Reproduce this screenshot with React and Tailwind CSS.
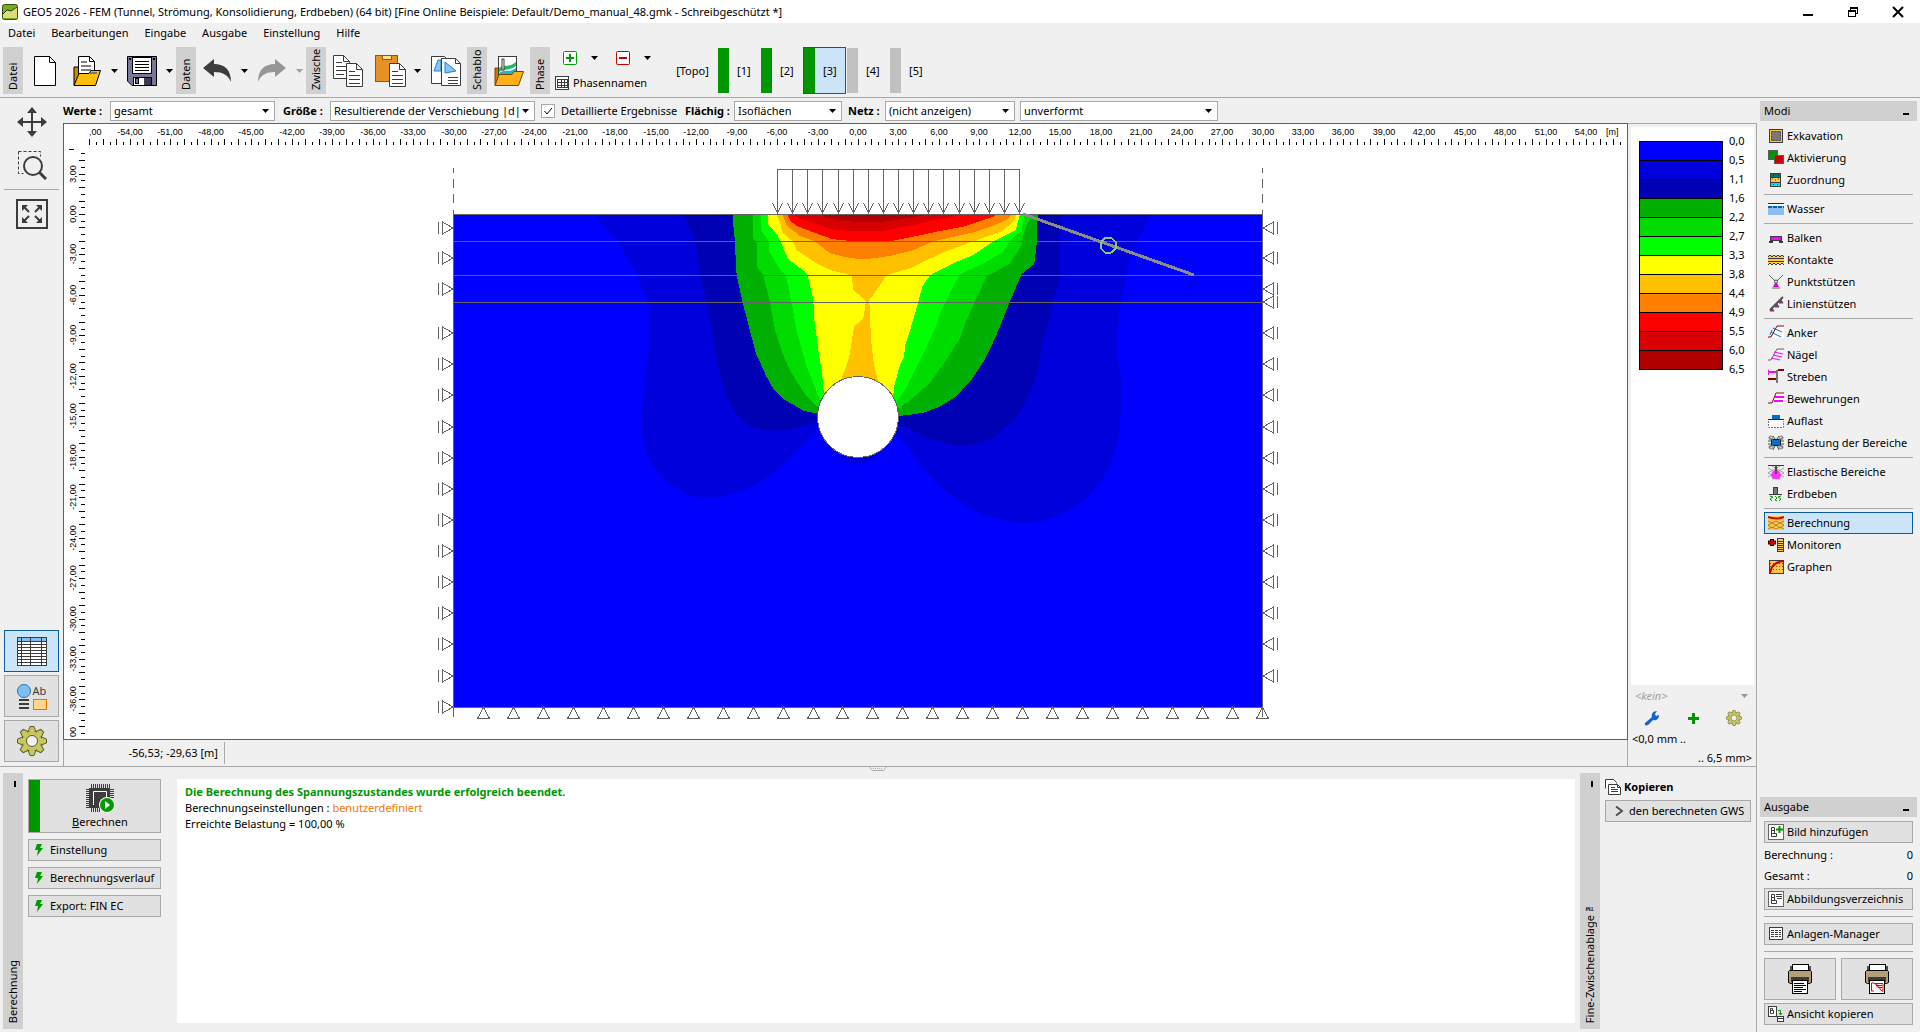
import { useState } from "react";

const menuItems = ["Datei", "Bearbeitungen", "Eingabe", "Ausgabe", "Einstellung", "Hilfe"];

const phases = [
  { id: 1, done: true },
  { id: 2, done: true },
  { id: 3, done: true },
  { id: 4, done: false },
  { id: 5, done: false },
];

const legendColors = [
  "#0000ff", "#0000dc", "#0000b4", "#00b000", "#00dc00", "#00ff00",
  "#ffff00", "#ffc000", "#ff8000", "#ff0000", "#d80000", "#b00000",
];
const legendLabels = ["0,0", "0,5", "1,1", "1,6", "2,2", "2,7", "3,3", "3,8", "4,4", "4,9", "5,5", "6,0", "6,5"];

const modeGroups = [
  ["Exkavation", "Aktivierung", "Zuordnung"],
  ["Wasser"],
  ["Balken", "Kontakte", "Punktstützen", "Linienstützen"],
  ["Anker", "Nägel", "Streben", "Bewehrungen", "Auflast", "Belastung der Bereiche"],
  ["Elastische Bereiche", "Erdbeben"],
  ["Berechnung", "Monitoren", "Graphen"],
];

/* ---------- Icons ---------- */

const ModeIcon = ({ name }) => {
  const shapes = {
    "Exkavation": (
      <>
        <rect x="1.5" y="1.5" width="13" height="13" fill="#ffc84a" stroke="#3c3c3c" />
        <rect x="3.5" y="3.5" width="9" height="9" fill="#787878" stroke="#3c3c3c" strokeDasharray="2 1" />
      </>
    ),
    "Aktivierung": (
      <>
        <rect x="0.5" y="0.5" width="9" height="9" fill="#009600" stroke="#5a5a5a" />
        <rect x="6.5" y="5.5" width="9" height="8" fill="#c80000" stroke="#5a5a5a" />
      </>
    ),
    "Zuordnung": (
      <>
        <rect x="2.5" y="1.5" width="10" height="4" fill="#00786e" stroke="#3c3c3c" />
        <rect x="2.5" y="5.5" width="10" height="5" fill="#ffc84a" stroke="#3c3c3c" />
        <rect x="2.5" y="10.5" width="10" height="4" fill="#00e6f0" stroke="#3c3c3c" />
        <path d="M5 4l2-2M9 4l2-2M4 7h1M7 8h1M10 7h1M5 12l1 1M9 12l1 1" stroke="#3c3c3c" />
      </>
    ),
    "Wasser": (
      <>
        <rect y="2" width="16" height="1" fill="#8c0000" />
        <rect y="3" width="16" height="2" fill="#fff" />
        <rect y="5" width="16" height="9" fill="#8cbef0" />
        <path d="M0 6h16" stroke="#0064b4" strokeWidth="2" strokeDasharray="4 1" />
      </>
    ),
    "Balken": (
      <>
        <rect x="2.5" y="6.5" width="11" height="4" fill="#ff00ff" stroke="#3c3c3c" />
        <path d="M1 12h4M11 12h4" stroke="#3c3c3c" strokeWidth="2" />
      </>
    ),
    "Kontakte": (
      <>
        <rect y="3" width="16" height="9" fill="#ffc84a" />
        <path d="M0 5l2-2 2 2 2-2 2 2 2-2 2 2 2-2 2 2M0 13l2-2 2 2 2-2 2 2 2-2 2 2 2-2 2 2M0 6.500h16M0 9.500h16" stroke="#3c3c3c" fill="none" />
      </>
    ),
    "Punktstützen": (
      <>
        <path d="M1 1l7 7 7-7M8 8l-2 4M8 8l2 4M4 14h8" stroke="#646464" fill="none" />
        <path d="M8 9l3 4H5z" fill="#d200d2" />
        <circle cx="8" cy="7.500" r="1.500" fill="#fff" stroke="#3c3c3c" />
      </>
    ),
    "Linienstützen": (
      <>
        <path d="M2 14L15 1" stroke="#505050" strokeWidth="2" />
        <path d="M13 4l2 3h-4zM9 8l2 3H7zM4 12l2 3H2z" fill="#d200d2" stroke="#505050" />
      </>
    ),
    "Anker": (
      <>
        <path d="M9 1h7v12H3z" fill="#fff" />
        <path d="M0 12h3l6-11h7" stroke="#8c0000" fill="none" />
        <path d="M5 3l9 4M3 7l10 5M4 5l-2 5" stroke="#0a6ec8" fill="none" />
      </>
    ),
    "Nägel": (
      <>
        <path d="M0 13h3L9 2h7" stroke="#646464" fill="none" />
        <path d="M6 5l9 2M5 8l9 2M3 11l9 2" stroke="#ff00ff" />
      </>
    ),
    "Streben": (
      <>
        <path d="M0 3h8" stroke="#ff00ff" strokeWidth="2" />
        <path d="M0.500 1v5" stroke="#ff00ff" />
        <path d="M10 1h6M0 10h8" stroke="#8c0000" strokeWidth="2" />
        <path d="M9 1v13" stroke="#787878" strokeWidth="2" />
      </>
    ),
    "Bewehrungen": (
      <>
        <path d="M8 1h8v12H3z" fill="#fff" />
        <path d="M0 12h4L8 2h8" stroke="#8c0000" fill="none" />
        <path d="M7 6h9M6 10h9" stroke="#ff00ff" strokeWidth="2" />
      </>
    ),
    "Auflast": (
      <>
        <rect x="4" y="2" width="8" height="4" fill="#0a6ec8" />
        <rect y="7" width="16" height="8" fill="#fff" />
        <path d="M0 6.500h16" stroke="#8c0000" />
        <path d="M0.500 8v6.500h15V8" stroke="#787878" fill="none" strokeDasharray="2 1" />
      </>
    ),
    "Belastung der Bereiche": (
      <>
        <path d="M1 2l4 3M5 1l2 3M11 1L9 4M15 2l-4 3M1 13l4-3M5 15l2-4M11 15l-2-4M15 13l-4-3M0 6h4M12 6h4M0 9h4M12 9h4" stroke="#505050" />
        <rect x="3.500" y="4.500" width="9" height="6" fill="#0a6ec8" stroke="#1e1e1e" />
        <circle cx="3" cy="3" r="2" fill="none" stroke="#787878" />
        <circle cx="13" cy="3" r="2" fill="none" stroke="#787878" />
        <circle cx="3" cy="12" r="2" fill="none" stroke="#787878" />
        <circle cx="13" cy="12" r="2" fill="none" stroke="#787878" />
      </>
    ),
    "Elastische Bereiche": (
      <>
        <path d="M0 4l16 9M0 9l12 6M4 2l12 7M16 4L0 13M12 2L0 9M16 9L4 15" stroke="#a0a0a0" />
        <path d="M0 1.500h16" stroke="#3c3c3c" />
        <path d="M8 5l4 3 1 4-2 3H5l-2-3 1-4z" fill="#ff32ff" />
        <path d="M8 2v8" stroke="#505050" strokeWidth="2" />
      </>
    ),
    "Erdbeben": (
      <>
        <rect x="5.500" y="1.500" width="4" height="7" fill="#787878" stroke="#3c3c3c" />
        <path d="M1 8.500h13" stroke="#3c3c3c" />
        <path d="M2 10l3 1-3 2 2 2M7 10l2 2-2 2 2 1M13 10l-3 1 3 2-2 2" stroke="#00a000" fill="none" />
      </>
    ),
    "Berechnung": (
      <>
        <rect y="1" width="16" height="14" fill="#ffc84a" />
        <path d="M0 6l4 2 4-2 4 2 4-2M0 10l4-2 4 2 4-2 4 2M0 10l4 3 4-3 4 3 4-3M0 14l4-2 4 2 4-2 4 2" stroke="#b48228" fill="none" />
        <path d="M0 2c4 2 12 2 16 0" stroke="#c80000" strokeWidth="2" fill="none" />
      </>
    ),
    "Monitoren": (
      <>
        <path d="M4 2v7M0 5.500h8" stroke="#3c0000" strokeWidth="4" />
        <path d="M4 3v5M1 5.500h6" stroke="#dc0000" strokeWidth="2" />
        <rect x="9.500" y="1.500" width="6" height="13" fill="#ffc84a" stroke="#3c3c3c" />
        <path d="M10 4.500h5M10 6.500h5M10 8.500h5M10 10.500h5M10 12.500h5" stroke="#3c3c3c" />
      </>
    ),
    "Graphen": (
      <>
        <rect x="1.500" y="1.500" width="14" height="13" fill="#ffc84a" stroke="#3c3c3c" />
        <path d="M2 4.500h13M2 7.500h13M2 10.500h13" stroke="#78500a" strokeDasharray="1 2" />
        <path d="M2 14C3 8 7 3 15 2" stroke="#c80000" strokeWidth="2" fill="none" />
      </>
    ),
  };
  return (
    <svg width="16" height="16" viewBox="0 0 16 16" className="shrink-0">
      {shapes[name]}
    </svg>
  );
};

const Caret = ({ className = "text-black" }) => (
  <svg width="7" height="4" viewBox="0 0 7 4" className={className}>
    <path d="M0 0h7L3.500 4z" fill="currentColor" />
  </svg>
);

const IconNew = () => (
  <svg width="22" height="30" viewBox="0 0 22 30">
    <path d="M0.500 0.500h15l6 6v23h-21z" fill="#fff" stroke="#000" />
    <path d="M15.500 0.500v6h6" fill="none" stroke="#000" />
  </svg>
);

const IconOpen = () => (
  <svg width="28" height="30" viewBox="0 0 28 30">
    <path d="M1 29V11h4l2 2h14" fill="#c88c00" stroke="#000" />
    <path d="M5.500 19V0.500h11l5 5V19" fill="#fff" stroke="#000" />
    <path d="M16.500 0.500v5h5M8 6h6M8 10h10M8 14h10" fill="none" stroke="#000" />
    <path d="M1 29.500l5-12h10l2-3h9.500l-5 15z" fill="#ffbe0a" stroke="#000" />
    <path d="M17 17h7" stroke="#787878" strokeWidth="2" />
  </svg>
);

const IconSave = () => (
  <svg width="30" height="30" viewBox="0 0 30 30">
    <path d="M0.500 0.500h29v29H5l-4.500-4.500z" fill="#78789b" stroke="#000" />
    <rect x="5.500" y="1.500" width="19" height="16" fill="#fff" stroke="#000" />
    <path d="M8 5.500h14M8 8.500h14M8 11.500h14M8 14.500h14" stroke="#000" />
    <rect x="6.500" y="21.500" width="18" height="8" fill="#fff" stroke="#000" />
    <rect x="17" y="22" width="7" height="7" fill="#3c3c50" />
    <rect x="8.500" y="22.500" width="3" height="5" fill="#78789b" stroke="#000" />
    <path d="M2 2h2v2H2zM26 2h2v2h-2z" fill="#000" />
  </svg>
);

const IconUndo = ({ className }) => (
  <svg width="28" height="24" viewBox="0 0 28 24" className={className}>
    <path d="M0 9L11 0v5c11 0 17 6 17 18-3-7-8-10-17-10v5z" fill="currentColor" />
  </svg>
);

const IconCopy = () => (
  <svg width="30" height="32" viewBox="0 0 30 32">
    <path d="M0.500 0.500h10l6 6v17h-16z" fill="#fff" stroke="#3c3c3c" />
    <path d="M10.500 0.500v6h6M3 7.500h6M3 11.500h11M3 15.500h11M3 19.500h8" fill="none" stroke="#3c3c3c" />
    <path d="M13.500 8.500h10l6 6v17h-16z" fill="#fff" stroke="#3c3c3c" />
    <path d="M23.500 8.500v6h6M16 16.500h6M16 20.500h11M16 24.500h11M16 28.500h11" fill="none" stroke="#3c3c3c" />
  </svg>
);

const IconPaste = () => (
  <svg width="31" height="32" viewBox="0 0 31 32">
    <rect x="0.500" y="0.500" width="22" height="26" fill="#e69122" stroke="#8c5a14" />
    <rect x="7.500" y="0.500" width="9" height="4" fill="#ffe08c" stroke="#8c5a14" />
    <path d="M14.500 8.500h10l6 6v17h-16z" fill="#fff" stroke="#3c3c3c" />
    <path d="M24.500 8.500v6h6M17 16.500h6M17 20.500h11M17 24.500h11M17 28.500h11" fill="none" stroke="#3c3c3c" />
  </svg>
);

const IconPictures = () => (
  <svg width="30" height="30" viewBox="0 0 30 30">
    <path d="M0.500 0.500h13l4 4v23h-17z" fill="#fff" stroke="#3c3c3c" />
    <path d="M3 15l4-11h3v11z" fill="#8cc3f0" stroke="#1e82d2" />
    <path d="M10.500 2.500h14l5 5v22h-19z" fill="#fff" stroke="#3c3c3c" />
    <path d="M24.500 2.500v5h5" fill="none" stroke="#3c3c3c" />
    <path d="M14 17V6l11 9z" fill="#8cc3f0" stroke="#1e82d2" />
    <path d="M17 21.500h10M17 24.500h10M17 27.500h10" stroke="#3c3c3c" />
  </svg>
);

const IconTemplate = () => (
  <svg width="30" height="30" viewBox="0 0 30 30">
    <path d="M1 29V12h4v17" fill="#c87800" stroke="#784600" />
    <rect x="4.500" y="0.500" width="18" height="22" fill="#fff" stroke="#3c3c3c" />
    <path d="M5 12c5-4 10 0 17-6v4c-6 5-12 2-17 6z" fill="#28b464" />
    <path d="M5 17c6-4 10 0 17-5v4c-6 5-12 1-17 5z" fill="#28b4c8" />
    <path d="M12 20l10-4v5H12z" fill="#e6501e" />
    <rect x="8" y="3" width="2" height="11" fill="#fff" stroke="#3c3c3c" />
    <path d="M1 29.500l4-11h13l2-3h9.500l-5 14z" fill="#ffaf19" stroke="#784600" />
  </svg>
);

const IconGear = ({ size }) => (
  <svg width={size} height={size} viewBox="-15 -15 30 30">
    <g fill="#c8c85a" stroke="#5a5a3c">
      {[0, 45, 90, 135, 180, 225, 270, 315].map((angle) => (
        <path key={angle} d="M-4 -9l2-5.500h4l2 5.500" transform={`rotate(${angle})`} />
      ))}
      <circle r="10" />
    </g>
    {[0, 45, 90, 135, 180, 225, 270, 315].map((angle) => (
      <path key={angle} d="M-3 -8l1-4h4l1 4z" fill="#c8c85a" transform={`rotate(${angle})`} />
    ))}
    <circle r="5.500" fill="#f0f0f0" stroke="#5a5a3c" />
  </svg>
);

const IconChip = () => (
  <svg width="30" height="30" viewBox="0 0 30 30">
    <path d="M6.500 1v28M8.500 1v28M10.500 1v28M12.500 1v28M14.500 1v28M16.500 1v24M18.500 1v24M20.500 1v24M22.500 1v20M24.500 1v10M1 6.500h28M1 8.500h28M1 10.500h28M1 12.500h28M1 14.500h28M1 16.500h20M1 18.500h20M1 20.500h18M1 22.500h18M1 24.500h18" stroke="#3c3c3c" shapeRendering="crispEdges" />
    <rect x="4" y="5" width="21" height="20" fill="#3c3c3c" />
    <path d="M8.500 22V8.500h13V14" fill="none" stroke="#fff" />
    <circle cx="22" cy="22" r="8" fill="#fff" />
    <circle cx="22" cy="22" r="7" fill="#009b00" />
    <path d="M20 18l5 4-5 4z" fill="#fff" />
  </svg>
);

const IconBolt = () => (
  <svg width="8" height="12" viewBox="0 0 8 12" className="shrink-0">
    <path d="M2 0h5L5 4h3L2 12l1-6H0z" fill="#009b00" />
  </svg>
);

const IconPrinter = ({ children }) => (
  <svg width="24" height="30" viewBox="0 0 24 30">
    <rect x="4.500" y="0.500" width="16" height="8" fill="#fff" stroke="#000" />
    <path d="M2 2h2v5H2zM21 2h2v5h-2z" fill="#505050" />
    <path d="M0.500 7.500l1-1h21l1 1v11l-2 1h-19l-2-1z" fill="#b4a078" stroke="#000" />
    <rect x="3" y="13" width="18" height="5" fill="#3c3c3c" />
    <rect x="4.500" y="16.500" width="15" height="13" fill="#fff" stroke="#000" />
    {children}
  </svg>
);

const IconPicture = ({ children }) => (
  <svg width="16" height="16" viewBox="0 0 16 16" className="shrink-0">
    <rect x="0.500" y="0.500" width="15" height="15" fill="#fff" stroke="#646464" />
    <path d="M3.500 3.500h3v3h-3zM3.500 6.500h3v3h-3zM3.500 9.500h5v3h-5z" fill="none" stroke="#3c3c3c" />
    {children}
  </svg>
);

/* ---------- Controls ---------- */

const GroupLabel = ({ children }) => (
  <div className="flex h-[47px] w-5 shrink-0 items-center overflow-hidden bg-[#d0d0d0] pb-1 [writing-mode:vertical-rl]">
    <span className="mt-auto h-full rotate-180 leading-5">{children}</span>
  </div>
);

const ToolButton = ({ label, children }) => (
  <button aria-label={label} className="flex h-full w-[43px] shrink-0 items-center justify-center">
    {children}
  </button>
);

const DropButton = ({ label, disabled, children }) => (
  <div className="flex h-full w-[55px] shrink-0">
    <button aria-label={label} className="flex w-[42px] items-center justify-center">{children}</button>
    <button aria-label={`${label} Optionen`} className="flex w-[13px] items-center justify-center">
      <Caret className={disabled ? "text-[#a0a0a0]" : "text-black"} />
    </button>
  </div>
);

const Select = ({ id, value, width }) => (
  <div className={`relative shrink-0 ${width}`}>
    <select id={id} aria-label={value} className="block h-5 w-full appearance-none border border-[#a8a8a8] bg-white pl-[3px] leading-[18px]">
      <option>{value}</option>
    </select>
    <span className="pointer-events-none absolute inset-y-0 right-[6px] flex items-center"><Caret /></span>
  </div>
);

const PanelHeader = ({ children }) => (
  <div className="flex h-5 shrink-0 items-center justify-between bg-[#d0d0d0] pr-2 pl-1">
    <h2>{children}</h2>
    <button aria-label={`${children} minimieren`} className="flex h-full w-[6px] items-center pt-[5px]">
      <span className="h-[2px] w-[6px] bg-black" />
    </button>
  </div>
);

const WideButton = ({ className = "", children }) => (
  <button className={`flex h-[22px] w-full shrink-0 items-center border border-[#a8a8a8] bg-[#e1e1e1] whitespace-nowrap ${className}`}>
    {children}
  </button>
);

const SideBar = ({ children }) => (
  <div className="mt-[6px] mb-[3px] flex w-5 shrink-0 flex-col items-center justify-between bg-[#d0d0d0] pt-[5px] pb-[6px]">
    <button aria-label={`${children} minimieren`} className="ml-1 flex h-3 w-3 items-center justify-center">
      <span className="h-[6px] w-[2px] bg-black" />
    </button>
    <span className="rotate-180 leading-5 whitespace-nowrap [writing-mode:vertical-rl]">{children}</span>
  </div>
);

/* ---------- Drawing ---------- */

const SCALE = 809 / 60; // px per metre
const ORIGIN = { x: 794, y: 90 };
const toX = (m) => Math.round(ORIGIN.x + m * SCALE);
const toY = (m) => Math.round(ORIGIN.y - m * SCALE);
const formatM = (m) => `${m},00`;

const range = (from, to, step) => {
  const out = [];
  for (let v = from; v <= to; v += step) out.push(v);
  return out;
};

// Contour bands, lowest value first, in thirds of a pixel
const bands = [
  {
    fill: "#0000dc",
    points: "498,43 535,97 562,124 600,185 620,226 652,300 655,320 660,370 659,440 650,510 643,575 636,635 634,680 637,715 650,755 663,790 710,847 773,884 812,891 870,892 950,868 990,848 1045,806 1085,768 1130,722 1165,688 1398,705 1435,743 1455,775 1510,837 1550,875 1600,913 1660,945 1710,957 1755,969 1790,969 1847,962 1910,935 1970,897 2015,843 2045,785 2067,712 2073,620 2073,545 2064,475 2065,400 2068,330 2075,285 2090,230 2100,180 2125,115 2166,43",
  },
  { fill: "#0000dc", points: "1230,765 1255,785 1285,795 1305,790 1345,765" },
  {
    fill: "#0000b4",
    points: "760,43 797,124 803,165 808,226 832,307 845,385 857,465 887,590 897,602 918,643 967,683 990,688 1030,692 1085,688 1163,665 1408,672 1445,690 1465,697 1478,711 1520,722 1565,734 1635,734 1690,715 1725,683 1755,660 1775,628 1800,580 1815,540 1830,475 1840,420 1858,360 1867,310 1890,230 1892,43",
  },
  {
    fill: "#00b000",
    points: "909,43 911,90 915,124 918,200 920,226 938,307 953,365 977,458 1007,525 1030,567 1062,598 1120,632 1163,641 1407,648 1450,643 1485,637 1530,620 1575,592 1622,543 1665,478 1695,415 1712,375 1740,305 1770,235 1775,222 1813,192 1821,124 1823,43",
  },
  {
    fill: "#00dc00",
    points: "969,43 970,115 981,130 981,200 1000,226 1020,307 1035,390 1058,460 1077,505 1100,545 1130,590 1165,625 1402,628 1445,597 1500,548 1545,485 1590,415 1605,370 1637,300 1670,230 1740,190 1775,135 1780,100 1798,60 1800,43",
  },
  {
    fill: "#00ff00",
    points: "993,43 994,92 1017,124 1018,155 1050,207 1068,226 1085,307 1098,385 1127,490 1152,555 1172,605 1400,605 1420,578 1440,540 1480,460 1513,390 1530,340 1550,300 1580,240 1592,222 1660,190 1717,157 1740,124 1775,92 1784,43",
  },
  {
    fill: "#ffff00",
    points: "1013,43 1014,72 1042,105 1075,178 1125,215 1134,230 1150,300 1153,360 1167,465 1175,510 1182,580 1390,588 1392,560 1410,495 1422,470 1427,430 1445,375 1465,305 1477,260 1500,226 1575,187 1630,165 1690,124 1757,90 1770,43",
  },
  {
    fill: "#ffc000",
    points: "1038,43 1050,65 1057,98 1088,124 1100,150 1155,187 1200,210 1250,222 1265,228 1270,270 1308,303 1300,355 1272,380 1258,470 1232,545 1345,545 1332,495 1325,440 1320,360 1318,300 1345,262 1368,228 1380,222 1440,205 1540,157 1630,124 1715,94 1750,65 1760,43",
  },
  {
    fill: "#ff8000",
    points: "1058,43 1068,75 1110,108 1155,124 1200,160 1250,172 1285,177 1320,176 1380,168 1445,152 1510,124 1630,97 1690,77 1730,60 1745,43",
  },
  {
    fill: "#ff0000",
    points: "1073,43 1080,62 1100,78 1150,97 1205,117 1270,124 1380,124 1460,108 1520,95 1600,80 1640,67 1690,50 1700,43",
  },
  { fill: "#d80000", points: "1088,43 1110,55 1160,72 1205,88 1265,93 1360,93 1400,85 1450,75 1510,62 1570,50 1600,43" },
  { fill: "#b00000", points: "1170,43 1190,52 1230,62 1285,66 1355,66 1430,55 1505,43" },
];

const leftSupports = [228, 258, 289, 333, 364, 395, 427, 458, 489, 520, 551, 582, 613, 644, 676, 707];
const rightSupports = [228, 258, 289, 302, 333, 364, 395, 427, 458, 489, 520, 551, 582, 613, 644, 676];

const Rulers = () => (
  <g className="[font-family:'Liberation_Sans',Arial,sans-serif] text-[9px]" fill="#000">
    <text x="25" y="11">,00</text>
    {range(-54, 54, 3).map((m) => (
      <text key={m} x={toX(m)} y="11" textAnchor="middle">{formatM(m)}</text>
    ))}
    <text x="1542" y="11">[m]</text>
    {range(-36, 3, 3).map((m) => (
      <text key={m} textAnchor="middle" transform={`translate(12 ${toY(m)}) rotate(-90)`}>{formatM(m)}</text>
    ))}
    <text transform="translate(12 613) rotate(-90)">00</text>
    <g stroke="#000" shapeRendering="crispEdges">
      {range(-57, 57, 0.5).map((m) => (
        <path key={m} d={`M${toX(m) + 0.5} ${m % 1 ? 18 : 15}V21`} />
      ))}
      {range(-38.5, 4.5, 0.5).map((m) => (
        <path key={m} d={`M${m % 1 ? 17 : 15} ${toY(m) + 0.5}H21`} />
      ))}
      <path d="M5 25.500h5" />
    </g>
  </g>
);

const Model = () => (
  <g shapeRendering="crispEdges">
    <rect x="389" y="90" width="809" height="493" fill="#0000ff" />
    <g transform="translate(366 76) scale(0.33333)">
      {bands.map((band, i) => (
        <polygon key={i} points={band.points} fill={band.fill} />
      ))}
    </g>
    <circle cx="794" cy="293" r="40.500" fill="#fff" stroke="#646464" />

    <g stroke="#646464" fill="none">
      <path d="M389.500 583.500V90.500H1198.500V583.500zM389 117.500H1198M389 151.500H1198M389 178.500H1198" />
      <path d="M389.500 44v5M389.500 55v9M389.500 70v9M389.500 86v5M1198.500 44v5M1198.500 55v9M1198.500 70v9M1198.500 86v5M389.500 584v9M1198.500 584v9" />
      {leftSupports.map((y) => (
        <path key={y} d={`M374.500 ${y - 130}v12M378.500 ${y - 130}v12L389 ${y - 124}z`} />
      ))}
      {rightSupports.map((y) => (
        <path key={y} d={`M1213.500 ${y - 130}v12M1209.500 ${y - 130}v12L1199 ${y - 124}z`} />
      ))}
      {range(1, 27, 1).map((i) => (
        <path key={i} d={`M${Math.round(389 + i * 29.96) + 0.5} 583.500l-6 11h12z`} />
      ))}
      {/* Flächenlast */}
      <path d="M713.500 89V45.500H955.500V89" />
      {range(0, 16, 1).map((i) => (
        <path key={i} d={`M${Math.round(713 + i * 15.125) + 0.5} 45v44M${Math.round(713 + i * 15.125) - 4.5} 79l5 10l5-10`} />
      ))}
    </g>

    <path d="M959 90L1130 151" stroke="#8c8c8c" strokeWidth="3" />
    <path d="M1041 113.500h6l5 5v6l-5 4h-6l-4-4v-6z" fill="none" stroke="#8cc88c" strokeWidth="2" />
  </g>
);

export default function App() {
  const [phase, setPhase] = useState(3);
  const [mode, setMode] = useState("Berechnung");
  const [detailed, setDetailed] = useState(true);

  return (
    <div className="flex h-screen w-full flex-col overflow-hidden bg-[#f0f0f0] [font-family:'Noto_Sans','Open_Sans',sans-serif] text-[11px] leading-4 text-black">
      {/* Titelleiste */}
      <header className="flex h-[23px] shrink-0 items-center bg-white pl-[2px]">
        <svg width="16" height="16" viewBox="0 0 16 16" className="mr-[5px]">
          <rect x="0.500" y="0.500" width="15" height="15" rx="2" fill="#78aa1e" stroke="#32500a" />
          <path d="M1 9l4-3 4 1 6-5v12H1z" fill="#dcdc78" />
          <path d="M1 10l4-4 4 1 6-4" stroke="#1e3c00" fill="none" />
        </svg>
        <h1 className="mr-auto">
          GEO5 2026 - FEM (Tunnel, Strömung, Konsolidierung, Erdbeben) (64 bit) [Fine Online Beispiele: Default/Demo_manual_48.gmk - Schreibgeschützt *]
        </h1>
        <button aria-label="Minimieren" className="flex h-full w-[45px] items-center justify-center">
          <svg width="10" height="10" viewBox="0 0 10 10"><path d="M0 8h10" stroke="#000" strokeWidth="2" /></svg>
        </button>
        <button aria-label="Wiederherstellen" className="flex h-full w-[45px] items-center justify-center">
          <svg width="10" height="10" viewBox="0 0 10 10" shapeRendering="crispEdges">
            <path d="M0.500 3.500h7v6h-7zM0 4h8M2.500 3V0.500h7v6H8M2 1h8" fill="none" stroke="#000" />
          </svg>
        </button>
        <button aria-label="Schließen" className="flex h-full w-[45px] items-center justify-center">
          <svg width="12" height="12" viewBox="0 0 12 12"><path d="M1 1l10 10M11 1L1 11" stroke="#000" strokeWidth="2" /></svg>
        </button>
      </header>

      <nav className="flex h-6 shrink-0 items-start gap-4 pt-[2px] pl-2">
        {menuItems.map((item) => (
          <button key={item}>{item}</button>
        ))}
      </nav>

      {/* Werkzeugleiste */}
      <div className="flex h-[51px] shrink-0 items-start border-b border-[#a8a8a8] pl-[3px]">
        <div className="flex h-[47px] items-center">
          <GroupLabel>Datei</GroupLabel>
          <ToolButton label="Neu"><IconNew /></ToolButton>
          <DropButton label="Öffnen"><IconOpen /></DropButton>
          <DropButton label="Speichern"><IconSave /></DropButton>
          <GroupLabel>Daten</GroupLabel>
          <DropButton label="Rückgängig"><IconUndo className="text-[#3c3c3c]" /></DropButton>
          <DropButton label="Wiederholen" disabled><IconUndo className="-scale-x-100 text-[#969696]" /></DropButton>
          <GroupLabel>Zwische</GroupLabel>
          <ToolButton label="Kopieren"><IconCopy /></ToolButton>
          <DropButton label="Einfügen"><IconPaste /></DropButton>
          <ToolButton label="Bilder"><IconPictures /></ToolButton>
          <GroupLabel>Schablo</GroupLabel>
          <ToolButton label="Schablone"><IconTemplate /></ToolButton>
          <GroupLabel>Phase</GroupLabel>

          <div className="flex h-full w-[122px] flex-col justify-between">
            <div className="flex h-[22px] items-center gap-[5px] pl-[10px]">
              <div className="flex items-center">
                <button aria-label="Phase hinzufügen" className="flex w-5 justify-center">
                  <svg width="14" height="14" viewBox="0 0 14 14">
                    <rect x="0.500" y="0.500" width="13" height="13" rx="1" fill="#fff" stroke="#009b00" />
                    <path d="M7 3v8M3 7h8" stroke="#009b00" strokeWidth="2" />
                  </svg>
                </button>
                <button aria-label="Phase hinzufügen Optionen" className="flex h-5 w-7 items-center justify-center"><Caret /></button>
              </div>
              <div className="flex items-center">
                <button aria-label="Phase entfernen" className="flex w-5 justify-center">
                  <svg width="14" height="14" viewBox="0 0 14 14">
                    <rect x="0.500" y="0.500" width="13" height="13" rx="1" fill="#fff" stroke="#c80000" />
                    <path d="M3 7h8" stroke="#c80000" strokeWidth="2" />
                  </svg>
                </button>
                <button aria-label="Phase entfernen Optionen" className="flex h-5 w-7 items-center justify-center"><Caret /></button>
              </div>
            </div>
            <button className="flex h-[22px] items-center gap-1 pl-[5px]">
              <svg width="14" height="14" viewBox="0 0 14 14" shapeRendering="crispEdges">
                <rect x="0.500" y="0.500" width="13" height="13" fill="#fff" stroke="#3c3c3c" />
                <path d="M2 3.500h10M2 6.500h10M2 9.500h10M2.500 3v9M6.500 3v9M9.500 3v9M12 3v9M2 11.500h10" stroke="#3c3c3c" />
              </svg>
              Phasennamen
            </button>
          </div>

          <button className="h-full w-[45px] pr-1">[Topo]</button>
          {phases.map(({ id, done }) => (
            <button
              key={id}
              onClick={() => setPhase(id)}
              className={`flex h-full w-[43px] items-center border ${phase === id ? "border-[#0a5aa0] bg-[#cce4f7]" : "border-transparent"}`}
            >
              <span className={`h-full w-[11px] ${done ? "bg-[#009600]" : "bg-[#c0c0c0]"}`} />
              <span className="pl-2">[{id}]</span>
            </button>
          ))}
        </div>
      </div>

      <div className="flex min-h-0 flex-1">
        <div className="flex min-w-0 flex-1 flex-col">
          <div className="flex min-h-0 flex-1">
            {/* Ansichtswerkzeuge */}
            <div className="flex w-[63px] shrink-0 flex-col items-stretch pr-1 pb-1 pl-1">
              <button aria-label="Verschieben" className="flex h-[48px] items-center justify-center">
                <svg width="30" height="30" viewBox="0 0 30 30" className="text-[#3c3c3c]">
                  <path d="M15 4v22M4 15h22" stroke="currentColor" strokeWidth="2" />
                  <path d="M15 0l5 6H10zM15 30l5-6H10zM0 15l6-5v10zM30 15l-6-5v10z" fill="currentColor" />
                </svg>
              </button>
              <button aria-label="Ausschnitt zoomen" className="flex h-[38px] items-center justify-center">
                <svg width="30" height="30" viewBox="0 0 30 30" fill="none" stroke="#3c3c3c">
                  <path d="M1.500 1.500h22v5M1.500 1.500v22h5" strokeDasharray="3 2" />
                  <circle cx="16" cy="16" r="9" strokeWidth="2" fill="#f0f0f0" />
                  <path d="M22 22l7 7" strokeWidth="3" />
                </svg>
              </button>
              <hr className="mt-[5px] border-[#a8a8a8]" />
              <button aria-label="Alles anzeigen" className="mt-1 flex h-10 items-center justify-center">
                <svg width="32" height="30" viewBox="0 0 32 30">
                  <rect x="1" y="1" width="30" height="28" fill="none" stroke="#3c3c3c" strokeWidth="2" />
                  <path d="M6 12V6h6zM26 12V6h-6zM6 18v6h6zM26 18v6h-6z" fill="#3c3c3c" />
                  <path d="M8 8l5 5M24 8l-5 5M8 22l5-5M24 22l-5-5" stroke="#3c3c3c" strokeWidth="2" />
                </svg>
              </button>
              <div className="mt-auto flex flex-col gap-[3px]">
                <button aria-label="Tabellen" className="flex h-[42px] items-center justify-center border border-[#0a5aa0] bg-[#cce4f7]">
                  <svg width="30" height="29" viewBox="0 0 30 29" shapeRendering="crispEdges">
                    <rect x="0.500" y="0.500" width="29" height="28" fill="#fff" stroke="#3c3c3c" />
                    <rect x="1" y="1" width="28" height="4" fill="#82bef0" />
                    <path d="M0 4.500h30M0 7.500h30M0 10.500h30M0 13.500h30M0 16.500h30M0 19.500h30M0 22.500h30M0 25.500h30M4.500 0v29M13.500 0v29M24.500 0v29" stroke="#3c3c3c" />
                  </svg>
                </button>
                <button aria-label="Beschriftung" className="flex h-[42px] items-center justify-center border border-[#a8a8a8] bg-[#e1e1e1]">
                  <div className="grid grid-cols-2 items-center justify-items-center gap-x-[2px] text-[#3c3c3c]">
                    <span className="h-[14px] w-[14px] rounded-full border border-[#1e78c8] bg-[#82bef0]" />
                    <span>Ab</span>
                    <span className="h-[10px] w-[10px] border-y-2 border-[#3c3c3c] py-[2px]"><span className="block h-[2px] bg-[#3c3c3c]" /></span>
                    <span className="h-[11px] w-[14px] border border-[#e67800] bg-[#ffd78c]" />
                  </div>
                </button>
                <button aria-label="Einstellungen" className="flex h-[42px] items-center justify-center border border-[#a8a8a8] bg-[#e1e1e1]">
                  <IconGear size={30} />
                </button>
              </div>
            </div>

            <div className="flex min-w-0 flex-1 flex-col">
              {/* Darstellungsoptionen */}
              <div className="flex h-[25px] shrink-0 items-center whitespace-nowrap">
                <label htmlFor="werte" className="w-[47px] font-bold">Werte :</label>
                <Select id="werte" value="gesamt" width="w-[165px]" />
                <label htmlFor="groesse" className="ml-2 w-[47px] font-bold">Größe :</label>
                <Select id="groesse" value="Resultierende der Verschiebung |d|" width="w-[205px]" />
                <label className="relative ml-[6px] flex items-center gap-[6px]">
                  <input
                    type="checkbox"
                    checked={detailed}
                    onChange={(e) => setDetailed(e.target.checked)}
                    className="h-[14px] w-[14px] appearance-none border border-[#a8a8a8] bg-white"
                  />
                  {detailed && (
                    <svg width="14" height="14" viewBox="0 0 14 14" className="pointer-events-none absolute left-0">
                      <path d="M3.500 7l2.500 3 5-6" fill="none" stroke="#000" />
                    </svg>
                  )}
                  <span className="w-[116px]">Detaillierte Ergebnisse</span>
                </label>
                <label htmlFor="flaechig" className="ml-2 w-[49px] font-bold">Flächig :</label>
                <Select id="flaechig" value="Isoflächen" width="w-[108px]" />
                <label htmlFor="netz" className="ml-[6px] w-[37px] font-bold">Netz :</label>
                <Select id="netz" value="(nicht anzeigen)" width="w-[130px]" />
                <span className="ml-[5px]"><Select id="verformung" value="unverformt" width="w-[198px]" /></span>
              </div>

              <div className="flex min-h-0 flex-1">
                <div className="flex min-w-0 flex-1 flex-col">
                  <main className="min-h-0 flex-1 border border-[#0a78c8] bg-white">
                    <svg className="block h-full w-full" role="img" aria-label="Isoflächen der Verschiebung">
                      <Rulers />
                      <Model />
                    </svg>
                  </main>
                  <div className="flex h-[26px] shrink-0 border-x border-[#a8a8a8]">
                    <div className="my-[2px] w-[161px] border-r border-[#a8a8a8] pr-[6px] text-right leading-[22px]">-56,53; -29,63 [m]</div>
                  </div>
                </div>

                {/* Farbskala */}
                <div className="flex w-[129px] shrink-0 flex-col border-t border-r border-[#a8a8a8]">
                  <div className="mt-[3px] mr-[2px] mb-0 ml-[3px] flex flex-1 gap-[6px] bg-white pt-[5px] pl-2">
                    <div className="mt-[9px] w-[84px] self-start border-x border-b border-black">
                      {legendColors.map((color) => (
                        <div key={color} className="h-[19px] border-t border-black" style={{ backgroundColor: color }} />
                      ))}
                    </div>
                    <div>
                      {legendLabels.map((label) => (
                        <div key={label} className="h-[19px] leading-[18px]">{label}</div>
                      ))}
                    </div>
                  </div>
                  <button className="flex h-[22px] items-center justify-between pr-2 pl-[7px] text-[#a0a0a0] italic">
                    &lt;kein&gt;
                    <Caret className="text-[#969696]" />
                  </button>
                  <div className="flex h-[22px] items-center justify-between pr-[14px] pl-4">
                    <button aria-label="Bearbeiten">
                      <svg width="16" height="16" viewBox="0 0 16 16">
                        <path d="M1 13l7-6c-1-3 1-6 5-6l-2 3 1 2 3-1c0 4-3 6-6 5l-5 5c-2 1-4 0-3-2z" fill="#1464d2" />
                      </svg>
                    </button>
                    <button aria-label="Hinzufügen">
                      <svg width="11" height="11" viewBox="0 0 11 11"><path d="M5.500 0v11M0 5.500h11" stroke="#009600" strokeWidth="3" /></svg>
                    </button>
                    <button aria-label="Skala einstellen"><IconGear size={16} /></button>
                  </div>
                  <div className="h-5 pl-1 leading-5">&lt;0,0 mm ..</div>
                  <div className="h-[17px] pr-1 text-right leading-[17px]">.. 6,5 mm&gt;</div>
                </div>
              </div>
            </div>
          </div>

          {/* Unterer Bereich */}
          <section className="relative flex h-[266px] shrink-0 border-t border-r border-[#a8a8a8] pl-[3px]">
            <svg width="18" height="4" viewBox="0 0 18 4" className="absolute top-0 left-1/2 -ml-[9px]">
              <path d="M0.500 0l3 3.500h11l3-3.500" fill="none" stroke="#a8a8a8" />
              <path d="M4 1.500h10" stroke="#a8a8a8" strokeDasharray="1 1" />
            </svg>
            <SideBar>Berechnung</SideBar>
            <div className="ml-[5px] flex w-[133px] shrink-0 flex-col gap-[6px] pt-3">
              <button className="flex h-[54px] border border-[#a8a8a8] bg-[#e1e1e1]">
                <span className="h-full w-[11px] bg-[#009600]" />
                <span className="flex h-full flex-1 flex-col items-center justify-between pt-[3px] pb-[2px]">
                  <IconChip />
                  <span><u>B</u>erechnen</span>
                </span>
              </button>
              {["Einstellung", "Berechnungsverlauf", "Export: FIN EC"].map((item) => (
                <WideButton key={item} className="gap-[7px] pl-[6px]"><IconBolt />{item}</WideButton>
              ))}
            </div>
            <div className="mt-3 mb-[9px] ml-4 min-w-0 flex-1 bg-white px-2 py-[5px]">
              <p className="font-bold text-[#009600]">Die Berechnung des Spannungszustandes wurde erfolgreich beendet.</p>
              <p>Berechnungseinstellungen : <span className="text-[#f07800]">benutzerdefiniert</span></p>
              <p>Erreichte Belastung = 100,00 %</p>
            </div>
            <div className="ml-[5px] flex"><SideBar>Fine-Zwischenablage™</SideBar></div>
            <div className="mx-[5px] w-[146px] shrink-0 pt-3">
              <h2 className="mb-[5px] flex items-center gap-[3px] font-bold">
                <svg width="16" height="16" viewBox="0 0 16 16">
                  <path d="M0.500 9.500v-9h8l3 3v1" fill="#fff" stroke="#3c3c3c" />
                  <path d="M3.500 5.500h9l3 3v7h-12z" fill="#fff" stroke="#3c3c3c" />
                  <path d="M12.500 5.500v3h3M6 8.500h4M6 10.500h7M6 12.500h7" fill="none" stroke="#3c3c3c" />
                </svg>
                Kopieren
              </h2>
              <WideButton className="gap-[6px] pl-[9px]">
                <svg width="8" height="10" viewBox="0 0 8 10"><path d="M1 0.500L7 5L1 9.500" fill="none" stroke="#505050" strokeWidth="2" /></svg>
                den berechneten GWS
              </WideButton>
            </div>
          </section>
        </div>

        {/* Rechte Leiste */}
        <aside className="flex w-[163px] shrink-0 flex-col justify-between pt-[3px] pr-[3px] pb-[7px] pl-[3px]">
          <div>
            <PanelHeader>Modi</PanelHeader>
            <nav className="px-1 pt-1">
              {modeGroups.map((group, i) => (
                <div key={i}>
                  {i > 0 && <hr className="my-[3px] border-[#a8a8a8]" />}
                  {group.map((item) => (
                    <button
                      key={item}
                      onClick={() => setMode(item)}
                      className={`flex h-[22px] w-full items-center gap-[3px] border pl-[3px] whitespace-nowrap ${mode === item ? "border-[#0a5aa0] bg-[#cce4f7]" : "border-transparent"}`}
                    >
                      <ModeIcon name={item} />
                      {item}
                    </button>
                  ))}
                </div>
              ))}
            </nav>
          </div>

          <div>
            <PanelHeader>Ausgabe</PanelHeader>
            <div className="px-1 pt-1">
              <WideButton className="gap-[3px] pl-[3px]">
                <IconPicture><path d="M11.500 2v7M8 5.500h7" stroke="#009600" strokeWidth="2" /></IconPicture>
                Bild hinzufügen
              </WideButton>
              <dl className="grid grid-cols-[1fr_auto] pt-[1px] pb-[2px] leading-[21px]">
                <dt>Berechnung :</dt><dd>0</dd>
                <dt>Gesamt :</dt><dd>0</dd>
              </dl>
              <WideButton className="gap-[3px] pl-[3px]">
                <IconPicture><path d="M8 3.500h6M8 5.500h6M9 7.500h5" stroke="#3c3c3c" /></IconPicture>
                Abbildungsverzeichnis
              </WideButton>
              <hr className="my-[6px] border-[#a8a8a8]" />
              <WideButton className="gap-[3px] pl-[3px]">
                <svg width="16" height="16" viewBox="0 0 16 16" shapeRendering="crispEdges">
                  <rect x="1.500" y="1.500" width="13" height="12" fill="#fff" stroke="#3c3c3c" />
                  <path d="M3 4.500h10M3 6.500h10M3 8.500h10M3 10.500h10" stroke="#3c3c3c" strokeDasharray="3 1" />
                </svg>
                Anlagen-Manager
              </WideButton>
              <hr className="my-[6px] border-[#a8a8a8]" />
              <div className="mb-[3px] grid grid-cols-2 gap-[5px]">
                <button aria-label="Drucken" className="flex h-[42px] items-center justify-center border border-[#a8a8a8] bg-[#e1e1e1]">
                  <IconPrinter><path d="M6 19.500h10M6 21.500h12M6 23.500h9M6 25.500h12M6 27.500h8" stroke="#000" /></IconPrinter>
                </button>
                <button aria-label="Als PDF drucken" className="flex h-[42px] items-center justify-center border border-[#a8a8a8] bg-[#e1e1e1]">
                  <IconPrinter><path d="M9 19H6.500v8H9M9 19.500h9v8l-3-2v-2l-3-1v-2zM11 21.500h6M13 23.500h4" fill="none" stroke="#e60000" /></IconPrinter>
                </button>
              </div>
              <WideButton className="gap-[3px] pl-[3px]">
                <svg width="16" height="16" viewBox="0 0 16 16">
                  <rect x="0.500" y="0.500" width="8" height="10" fill="#fff" stroke="#3c3c3c" />
                  <path d="M2.500 2.500h2v2h-2zM2.500 4.500h3v3h-3z" fill="none" stroke="#3c3c3c" />
                  <path d="M10 4.500h2.500v4M11 7l1.500 2L14 7" fill="none" stroke="#009600" />
                  <rect x="9.500" y="10.500" width="6" height="5" fill="#fff" stroke="#3c3c3c" />
                  <path d="M10 12.500h5" stroke="#3c3c3c" />
                </svg>
                Ansicht kopieren
              </WideButton>
            </div>
          </div>
        </aside>
      </div>
    </div>
  );
}
